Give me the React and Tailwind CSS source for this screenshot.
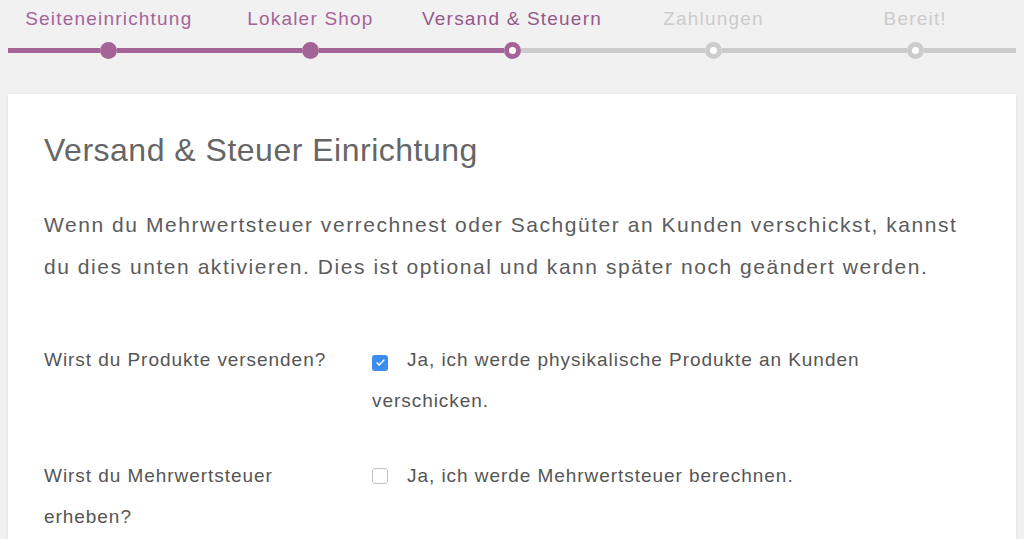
import React from "react";

// wizard steps: done / current / todo
const steps = [
  { label: "Seiteneinrichtung", state: "done" },
  { label: "Lokaler Shop", state: "done" },
  { label: "Versand & Steuern", state: "current" },
  { label: "Zahlungen", state: "todo" },
  { label: "Bereit!", state: "todo" },
];

const StepDot = ({ state }) => {
  if (state === "done")
    return <div className="w-[17px] h-[17px] rounded-full bg-[#a46497]" />;
  return (
    <div
      className={`w-[17px] h-[17px] rounded-full flex items-center justify-center ${
        state === "current" ? "bg-[#a46497]" : "bg-[#cccccc]"
      }`}
    >
      <div className="w-[7px] h-[7px] rounded-full bg-white" />
    </div>
  );
};

const Checkbox = ({ checked }) =>
  checked ? (
    <span className="inline-flex align-[-2px] w-[16px] h-[16px] rounded-[3px] bg-[#3b8ef0] items-center justify-center mr-[19px]">
      <svg viewBox="0 0 16 16" className="w-[11px] h-[11px]">
        <path
          d="M3 8.5l3 3 7-7"
          fill="none"
          stroke="white"
          strokeWidth="2"
          strokeLinecap="round"
          strokeLinejoin="round"
        />
      </svg>
    </span>
  ) : (
    <span className="inline-block align-[-2px] w-[16px] h-[16px] rounded-[3px] border border-[#c4c4c4] bg-white mr-[19px]" />
  );

export default function App() {
  return (
    <div className="h-[539px] bg-[#f1f1f1] font-['Liberation_Sans',Arial,sans-serif] overflow-hidden">
      {/* Steps */}
      <div className="px-[8px] pt-[7px]">
        <div className="grid grid-cols-5">
          {steps.map((s) => (
            <div
              key={s.label}
              className={`text-center text-[19px] leading-[24px] tracking-[1.2px] ${
                s.state === "todo" ? "text-[#cccccc]" : s.state === "current" ? "text-[#96588a]" : "text-[#a46497]"
              }`}
            >
              {s.label}
            </div>
          ))}
        </div>
        <div className="grid grid-cols-5 mt-[11px] h-[17px]">
          {steps.map((s, i) => (
            <div key={s.label} className="flex items-center">
              <div
                className={`flex-1 h-[5px] ${
                  i <= 2 ? "bg-[#a46497]" : "bg-[#cccccc]"
                }`}
              />
              <StepDot state={s.state} />
              <div
                className={`flex-1 h-[5px] ${
                  i <= 1 ? "bg-[#a46497]" : "bg-[#cccccc]"
                }`}
              />
            </div>
          ))}
        </div>
      </div>

      {/* Card */}
      <div className="mx-[8px] mt-[35px] bg-white shadow-[0_1px_3px_rgba(0,0,0,0.08)] px-[36px] pt-[36px] pb-[20px]">
        <h1 className="text-[32px] leading-[40px] tracking-[0.5px] text-[#666666] font-normal">
          Versand &amp; Steuer Einrichtung
        </h1>
        <p className="mt-[34px] text-[21px] leading-[42px] tracking-[1.55px] text-[#5c5c5c]">
          Wenn du Mehrwertsteuer verrechnest oder Sachgüter an Kunden verschickst, kannst du
          dies unten aktivieren. Dies ist optional und kann später noch geändert werden.
        </p>

        <div className="mt-[51px] grid grid-cols-[300px_1fr] gap-x-[28px] gap-y-[34px] text-[19px] leading-[41px] tracking-[0.95px] text-[#555555]">
          <div>Wirst du Produkte versenden?</div>
          <div className="max-w-[560px]">
            <Checkbox checked />
            Ja, ich werde physikalische Produkte an Kunden verschicken.
          </div>
          <div>Wirst du Mehrwertsteuer erheben?</div>
          <div>
            <Checkbox />
            Ja, ich werde Mehrwertsteuer berechnen.
          </div>
        </div>
      </div>
    </div>
  );
}
